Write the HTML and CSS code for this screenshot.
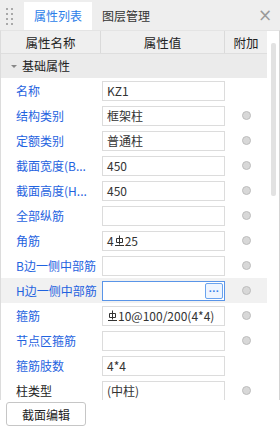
FILE: index.html
```html
<!DOCTYPE html>
<html lang="zh-CN">
<head>
  <meta charset="UTF-8">
  <meta name="viewport" content="width=device-width, initial-scale=1.0">
  <title>属性列表</title>
  <link rel="stylesheet" href="styles.css">
</head>
<body>
  <div class="tabs">
    <div class="handle">
      <i></i><i></i><i></i><i></i><i></i><i></i><i></i><i></i>
    </div>
    <div class="tab active">属性列表</div>
    <div class="tab">图层管理</div>
    <div class="close">×</div>
  </div>

  <div class="panel">
    <div class="grid">
      <div class="head">
        <div class="c-label">属性名称</div>
        <div class="c-value">属性值</div>
        <div class="c-extra">附加</div>
      </div>
      <div class="group"><span class="arrow"></span>基础属性</div>

      <div class="row">
        <div class="label">名称</div>
        <div class="value"><div class="field">KZ1</div></div>
        <div class="extra"></div>
      </div>
      <div class="row">
        <div class="label">结构类别</div>
        <div class="value"><div class="field">框架柱</div></div>
        <div class="extra"><span class="dot"></span></div>
      </div>
      <div class="row">
        <div class="label">定额类别</div>
        <div class="value"><div class="field">普通柱</div></div>
        <div class="extra"><span class="dot"></span></div>
      </div>
      <div class="row">
        <div class="label">截面宽度(B...</div>
        <div class="value"><div class="field">450</div></div>
        <div class="extra"><span class="dot"></span></div>
      </div>
      <div class="row">
        <div class="label">截面高度(H...</div>
        <div class="value"><div class="field">450</div></div>
        <div class="extra"><span class="dot"></span></div>
      </div>
      <div class="row">
        <div class="label">全部纵筋</div>
        <div class="value"><div class="field"></div></div>
        <div class="extra"><span class="dot"></span></div>
      </div>
      <div class="row">
        <div class="label">角筋</div>
        <div class="value"><div class="field">4<svg class="bar" width="9" height="12" viewBox="0 0 9 12"><path d="M4.5 0.5V9.5M1.5 3.5H7.5V7.5H1.5ZM0 10.5H9" fill="none" stroke="#333" stroke-width="1"/></svg>25</div></div>
        <div class="extra"><span class="dot"></span></div>
      </div>
      <div class="row">
        <div class="label">B边一侧中部筋</div>
        <div class="value"><div class="field"></div></div>
        <div class="extra"><span class="dot"></span></div>
      </div>
      <div class="row current">
        <div class="label">H边一侧中部筋</div>
        <div class="value">
          <div class="field focus"><span class="more">...</span></div>
        </div>
        <div class="extra"><span class="dot"></span></div>
      </div>
      <div class="row">
        <div class="label">箍筋</div>
        <div class="value"><div class="field"><svg class="bar" width="9" height="12" viewBox="0 0 9 12"><path d="M4.5 0.5V9.5M1.5 3.5H7.5V7.5H1.5ZM0 10.5H9" fill="none" stroke="#333" stroke-width="1"/></svg>10@100/200(4*4)</div></div>
        <div class="extra"><span class="dot"></span></div>
      </div>
      <div class="row">
        <div class="label">节点区箍筋</div>
        <div class="value"><div class="field"></div></div>
        <div class="extra"><span class="dot"></span></div>
      </div>
      <div class="row">
        <div class="label">箍筋肢数</div>
        <div class="value"><div class="field">4*4</div></div>
        <div class="extra"></div>
      </div>
      <div class="row">
        <div class="label plain">柱类型</div>
        <div class="value"><div class="field">(中柱)</div></div>
        <div class="extra"><span class="dot"></span></div>
      </div>
    </div>
    <div class="scroll"><div class="thumb"></div></div>
  </div>

  <div class="footer">
    <button class="btn">截面编辑</button>
  </div>
</body>
</html>
```

FILE: styles.css
```css
* {
  margin: 0;
  padding: 0;
  box-sizing: border-box;
}

body {
  width: 280px;
  height: 430px;
  overflow: hidden;
  background: #fff;
  color: #333;
  font-family: "Noto Sans CJK SC", "Liberation Sans", sans-serif;
  font-size: 12px;
}

/* tab bar */
.tabs {
  height: 30px;
  display: flex;
  align-items: flex-end;
  background: #eeeeee;
}

.handle {
  width: 24px;
  height: 28px;
  display: grid;
  grid-template-columns: 2px 2px;
  grid-auto-rows: 2px;
  gap: 3px 3px;
  align-content: center;
  padding-left: 6px;
}

.handle i {
  background: #a9a9a9;
}

.tab {
  height: 28px;
  line-height: 28px;
  padding: 0 10px;
  color: #333;
}

.tab.active {
  background: #fff;
  color: #2b7de9;
}

.close {
  margin-left: auto;
  width: 30px;
  height: 30px;
  line-height: 30px;
  text-align: center;
  color: #9a9a9a;
  font-size: 17px;
  font-family: "DejaVu Sans", sans-serif;
}

/* property panel */
.panel {
  height: 370px;
  display: flex;
  border-left: 1px solid #dcdcdc;
  border-right: 1px solid #d4d4d4;
  border-top: 1px solid #e4e4e4;
}

.grid {
  width: 266px;
  overflow: hidden;
}

.head {
  height: 23px;
  display: flex;
  background: #efefef;
  border-bottom: 1px solid #dedede;
  color: #222;
  font-size: 12.5px;
}

.head div {
  line-height: 23px;
  text-align: center;
}

.c-label {
  width: 100px;
  border-right: 1px solid #dadada;
}

.c-value {
  width: 124px;
  border-right: 1px solid #dadada;
}

.c-extra {
  width: 42px;
}

.group {
  height: 24px;
  line-height: 24px;
  background: #ebebeb;
  padding-left: 21px;
  position: relative;
  color: #222;
}

.arrow {
  position: absolute;
  left: 10px;
  top: 11px;
  border-left: 3px solid transparent;
  border-right: 3px solid transparent;
  border-top: 3px solid #888;
}

.row {
  height: 25px;
  display: flex;
  align-items: center;
}

.row.current {
  background: #f1f1f1;
}

.label {
  width: 100px;
  padding-left: 15px;
  white-space: nowrap;
  overflow: hidden;
  color: #1f63e0;
}

.label.plain {
  color: #222;
}

.value {
  width: 124px;
  padding-left: 1px;
}

.field {
  position: relative;
  height: 20px;
  line-height: 18px;
  padding-left: 4px;
  background: #fff;
  border: 1px solid #dcdcdc;
  white-space: nowrap;
  overflow: hidden;
  color: #333;
}

.field.focus {
  border-color: #5a95e8;
}

.bar {
  vertical-align: -1px;
  margin: 0 1px;
}

.more {
  position: absolute;
  right: 1px;
  top: 1px;
  width: 18px;
  height: 16px;
  line-height: 8px;
  text-align: center;
  border: 1px solid #6aa3ee;
  border-radius: 2px;
  background: #eef5ff;
  color: #3b82e8;
  font-family: "Liberation Sans", sans-serif;
  font-weight: bold;
  font-size: 11px;
  letter-spacing: 0.5px;
}

.extra {
  width: 42px;
  display: flex;
  justify-content: center;
}

.dot {
  width: 9px;
  height: 9px;
  border-radius: 50%;
  background: #d8d8d8;
  border: 1px solid #bdbdbd;
}

/* scrollbar */
.scroll {
  flex: 1;
  padding: 12px 0 0 4px;
}

.thumb {
  width: 5px;
  height: 153px;
  background: #e2e2e2;
  border-radius: 2px;
}

/* bottom */
.footer {
  padding: 2px 0 0 6px;
}

.btn {
  width: 80px;
  height: 24px;
  background: #fff;
  border: 1px solid #c6c6c6;
  border-radius: 3px;
  font-family: inherit;
  font-size: 12px;
  color: #222;
}
```
